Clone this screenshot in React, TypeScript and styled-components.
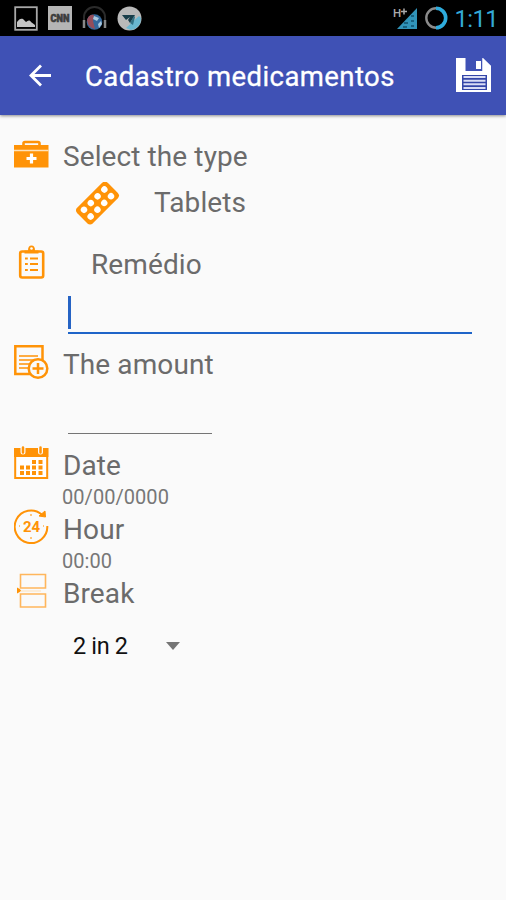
import React from "react";
import styled, { createGlobalStyle } from "styled-components";

const ORANGE = "#ff9307";

const GlobalStyle = createGlobalStyle`
  * { box-sizing: border-box; }
  html, body { margin: 0; padding: 0; background: #fafafa; }
  body { font-family: Roboto, "Noto Sans", sans-serif; overflow: hidden; }
`;

const Screen = styled.div`
  width: 506px;
  height: 900px;
  display: flex;
  flex-direction: column;
  background: #fafafa;
`;

const StatusBar = styled.div`
  height: 36px;
  flex: none;
  background: #000;
  display: flex;
  align-items: center;
  justify-content: space-between;
  padding: 0 8px 0 14px;
`;

const StatusGroup = styled.div<{ $gap: number }>`
  display: flex;
  align-items: center;
  gap: ${(p) => p.$gap}px;
`;

const Clock = styled.span`
  color: #33a9d6;
  font-size: 24px;
  line-height: 36px;
  letter-spacing: -0.7px;
  padding-top: 2px;
`;

const Toolbar = styled.header`
  height: 79px;
  flex: none;
  background: #3f51b5;
  display: flex;
  align-items: center;
  padding: 0 14px 0 27px;
  box-shadow: 0 1px 3px rgba(0, 0, 0, 0.45);
`;

const Title = styled.h1`
  flex: 1;
  margin: 0 0 0 33px;
  font-size: 27.5px;
  font-weight: 400;
  line-height: 36px;
  letter-spacing: 0.43px;
  color: #fff;
  white-space: nowrap;
  padding-top: 2px;
  -webkit-text-stroke: 0.3px #fff;
`;

const IconButton = styled.button`
  display: flex;
  border: 0;
  padding: 0;
  background: none;
`;

const Form = styled.main`
  display: flex;
  flex-direction: column;
  padding-top: 23px;
`;

const Row = styled.div`
  height: 38px;
  display: grid;
  grid-template-columns: 49px 1fr;
  padding-left: 14px;
`;

const RowIcon = styled.svg`
  display: block;
  width: 35px;
  height: 36px;
  margin-top: -1px;
`;

const Label = styled.span<{ $indent?: number; $drop?: number }>`
  font-size: 28px;
  line-height: 38px;
  letter-spacing: 0.1px;
  color: #6b6b6b;
  white-space: nowrap;
  padding-left: ${(p) => p.$indent ?? 0}px;
  padding-top: ${(p) => p.$drop ?? 0}px;
`;

const TypeRow = styled.div`
  height: 70px;
  display: flex;
  align-items: flex-start;
  padding: 6px 0 0 76px;
`;

const PackIcon = styled.svg`
  display: block;
  width: 44px;
  height: 43px;
`;

const Value = styled.div`
  height: 26px;
  padding-left: 62px;
  font-size: 20px;
  line-height: 27px;
  letter-spacing: 0.05px;
  color: #777;
`;

const TextField = styled.div<{ $width: number; $active?: boolean }>`
  width: ${(p) => p.$width}px;
  height: 50px;
  margin: 0 0 12px 68px;
  border-bottom: ${(p) => (p.$active ? "2px solid #1e64c8" : "1px solid #757575")};
  padding-top: 12px;
`;

const Caret = styled.div`
  width: 3px;
  height: 33px;
  background: #2563c4;
`;

const Select = styled.div`
  display: flex;
  align-items: center;
  height: 68px;
  padding-left: 73px;
  color: #111;
  font-size: 23.5px;
  line-height: 30px;
`;

const SelectText = styled.span`
  width: 93px;
  letter-spacing: -0.35px;
  white-space: nowrap;
`;

const SaveIcon = () => (
  <svg width="38" height="39" viewBox="0 0 38 39">
    <path d="M2 2H29L37 10V36H2Z" fill="#fff" />
    <path d="M11.500 1h17v14h-17z" fill="#3f51b5" />
    <path d="M22 5h5v8h-5z" fill="#fff" />
    <path d="M28.500 2L37 10V17H28.500z" fill="#fff" />
    <path d="M8 19h25v15H8z" fill="#3446a8" />
    <path d="M9.500 21h22M9.500 24.700h22M9.500 28.300h22M9.500 32h22" stroke="#d9ddf5" strokeWidth="2" />
  </svg>
);

export default function App() {
  return (
    <>
      <GlobalStyle />
      <Screen>
        <StatusBar>
          <StatusGroup $gap={10}>
            <svg width="24" height="25" viewBox="0 0 24 25">
              <rect x="1.2" y="1.2" width="21.600" height="22.600" fill="none" stroke="#a8a8a8" strokeWidth="1.800" />
              <path d="M3 21v-5c2-3 4-4 6-3l3 3c2-2 4-2 5 0l4 3v2z" fill="#c4c4c4" />
            </svg>
            <svg width="24" height="24" viewBox="0 0 24 24">
              <rect width="24" height="24" fill="#b5b5b5" />
              <text x="2.500" y="16" fontSize="10.500" fontWeight="900" fill="#3c3c3c" stroke="#3c3c3c" strokeWidth="0.6" textLength="19" lengthAdjust="spacingAndGlyphs" fontFamily="Roboto">CNN</text>
            </svg>
            <svg width="25" height="25" viewBox="0 0 25 25">
              <path d="M2 15V11a10 9.500 0 0 1 21 0v4" fill="none" stroke="#2b2b2b" strokeWidth="2" />
              <circle cx="12.500" cy="16" r="7.800" fill="#34689c" />
              <path d="M5 14q2-6 7-5l-1 6 2 8q-7-1-8-9" fill="#954d5a" />
              <path d="M12 10l5 2-2 3-4-2zM16 18l3-3 1 3-3 4z" fill="#a8c7de" />
              <path d="M2 14v8M23 14v8" stroke="#888" strokeWidth="2.500" />
            </svg>
            <svg width="25" height="25" viewBox="0 0 25 25">
              <circle cx="12.500" cy="12.500" r="12" fill="#b9b9b9" />
              <path d="M9 22L22 10l2 2q0 10-10 12z" fill="#69b7d0" />
              <path d="M5 9l13 0-5 8-2-3 2-3-4 3z" fill="#183d49" />
              <path d="M13 17l4-7 1 1-2 8z" fill="#317286" />
            </svg>
          </StatusGroup>
          <StatusGroup $gap={6}>
            <svg width="25" height="24" viewBox="0 0 25 24">
              <path d="M24 2v21H4z" fill="#3194b9" />
              <path d="M11 17h4M10 21h4M18 10h3M18 15h3M18 20h3" stroke="#176180" strokeWidth="2" />
              <text x="0" y="11" fontSize="11.500" fontWeight="500" fill="#aaa" fontFamily="Roboto">H</text>
              <path d="M8 5.500h6M11 2.500v6" stroke="#aaa" strokeWidth="1.500" />
            </svg>
            <svg width="25" height="24" viewBox="0 0 25 24">
              <circle cx="12" cy="12" r="9.700" fill="none" stroke="#8b8b8b" strokeWidth="2.400" />
              <path d="M12 2.300a9.700 9.700 0 0 1 0 19.400" fill="none" stroke="#2eacdd" strokeWidth="3.600" />
            </svg>
            <Clock>1:11</Clock>
          </StatusGroup>
        </StatusBar>

        <Toolbar>
          <IconButton aria-label="Back">
            <svg width="25" height="24" viewBox="0 0 25 24" fill="none" stroke="#fff" strokeWidth="2.800">
              <path d="M24 11.500H4M14 1.500L4 11.500l10 10" />
            </svg>
          </IconButton>
          <Title>Cadastro medicamentos</Title>
          <IconButton aria-label="Save">
            <SaveIcon />
          </IconButton>
        </Toolbar>

        <Form>
          <Row>
            <RowIcon viewBox="0 0 35 36">
              <path d="M9.500 9V6.500q0-1.500 1.500-1.500h13q1.500 0 1.500 1.500V9" fill="none" stroke={ORANGE} strokeWidth="2.600" />
              <path d="M0 8h34.500v22.500H0z" fill={ORANGE} />
              <path d="M0 13.500h34.500" stroke="#ffe2b8" strokeWidth="1.500" />
              <path d="M17.500 16.500v10M12.500 21.500h10" stroke="#fff" strokeWidth="3.200" />
            </RowIcon>
            <Label>Select the type</Label>
          </Row>
          <TypeRow>
            <PackIcon viewBox="0 0 44 43">
              <g transform="translate(21.500 21) rotate(-45)">
                <rect x="-21.500" y="-11" width="43" height="22" rx="4" fill={ORANGE} />
                {[-14.4, -4.8, 4.8, 14.4].map((x) => (
                  <g key={x} fill="#fff">
                    <circle cx={x} cy="-4.700" r="3.200" />
                    <circle cx={x} cy="4.700" r="3.200" />
                  </g>
                ))}
              </g>
            </PackIcon>
            <Label $indent={34} $drop={2}>Tablets</Label>
          </TypeRow>

          <Row>
            <RowIcon viewBox="0 0 35 36">
              <g transform="translate(0 -1.500)">
                <rect x="6.200" y="8" width="23" height="26" rx="2" fill="none" stroke={ORANGE} strokeWidth="2.600" />
                <path d="M10.500 10V7h3.500q0-5 3.500-5t3.500 5h3.500v3z" fill={ORANGE} />
                <circle cx="17.500" cy="5" r="1.300" fill="#fff" />
                <path d="M11 15h2.800M16 15h8M11 20.500h2.800M16 20.500h8M11 26.500h2.800M16 26.500h8" stroke={ORANGE} strokeWidth="2.200" />
              </g>
            </RowIcon>
            <Label $indent={28}>Remédio</Label>
          </Row>
          <TextField $width={404} $active>
            <Caret />
          </TextField>

          <Row>
            <RowIcon viewBox="0 0 35 36">
              <path d="M16 29H1.300V1.300H28.500V17" fill="none" stroke={ORANGE} strokeWidth="2.500" />
              <path d="M5 11h19M5 15h18M5 19h12M5 23h9" stroke={ORANGE} strokeWidth="1.700" />
              <circle cx="24" cy="23.500" r="9.300" fill="#fafafa" stroke={ORANGE} strokeWidth="2.500" />
              <path d="M24 18v11M18.500 23.500h11" stroke={ORANGE} strokeWidth="2.500" />
            </RowIcon>
            <Label>The amount</Label>
          </Row>
          <TextField $width={144} />

          <Row>
            <RowIcon viewBox="0 0 35 36">
              <path d="M1.200 4h32v29h-32z" fill="#fff" stroke={ORANGE} strokeWidth="2" />
              <path d="M0 3h34.400v9H0z" fill={ORANGE} />
              <path d="M9 2v5M26.500 2v5" stroke="#fafafa" strokeWidth="5" strokeLinecap="round" />
              <path d="M9 2.500v5M26.500 2.500v5" stroke={ORANGE} strokeWidth="2.500" strokeLinecap="round" />
              <path d="M18 17h4M24.500 17h4M6 22.500h4M12 22.500h4M18 22.500h4M24.500 22.500h4M6 28h4M12 28h4M18 28h4M24.500 28h4" stroke={ORANGE} strokeWidth="4" />
            </RowIcon>
            <Label $drop={1}>Date</Label>
          </Row>
          <Value>00/00/0000</Value>

          <Row>
            <RowIcon viewBox="0 0 35 36">
              <path d="M33.300 17a16.300 16.300 0 1 1-5.500-11.500" fill="none" stroke={ORANGE} strokeWidth="2" />
              <path d="M25 7l6-5 .500 6z" fill={ORANGE} stroke={ORANGE} />
              <path d="M17 5v2M17 28v2M5 17h1M29 17h1" stroke="#ffc478" strokeWidth="2" />
              <text x="17.500" y="22.500" textAnchor="middle" fontFamily="Roboto" fontWeight="700" fontSize="15" fill={ORANGE}>24</text>
            </RowIcon>
            <Label $drop={1}>Hour</Label>
          </Row>
          <Value>00:00</Value>

          <Row>
            <RowIcon viewBox="0 0 35 36">
              <g fill="none" stroke="#ffb65c" strokeWidth="1.600">
                <path d="M6.500 15V1.500H31.500V15ZM6.500 34V21H31.500V34Z" />
                <path d="M5 18h22" stroke="#ffe1b8" strokeWidth="1" />
              </g>
              <path d="M3 14.500q3.500 1.500 4 3-0.500 1.500-4 3z" fill={ORANGE} />
            </RowIcon>
            <Label $drop={1}>Break</Label>
          </Row>
          <Select>
            <SelectText>2 in 2</SelectText>
            <svg width="14" height="8" viewBox="0 0 14 8">
              <path d="M0 0h14L7 8z" fill="#757575" />
            </svg>
          </Select>
        </Form>
      </Screen>
    </>
  );
}
